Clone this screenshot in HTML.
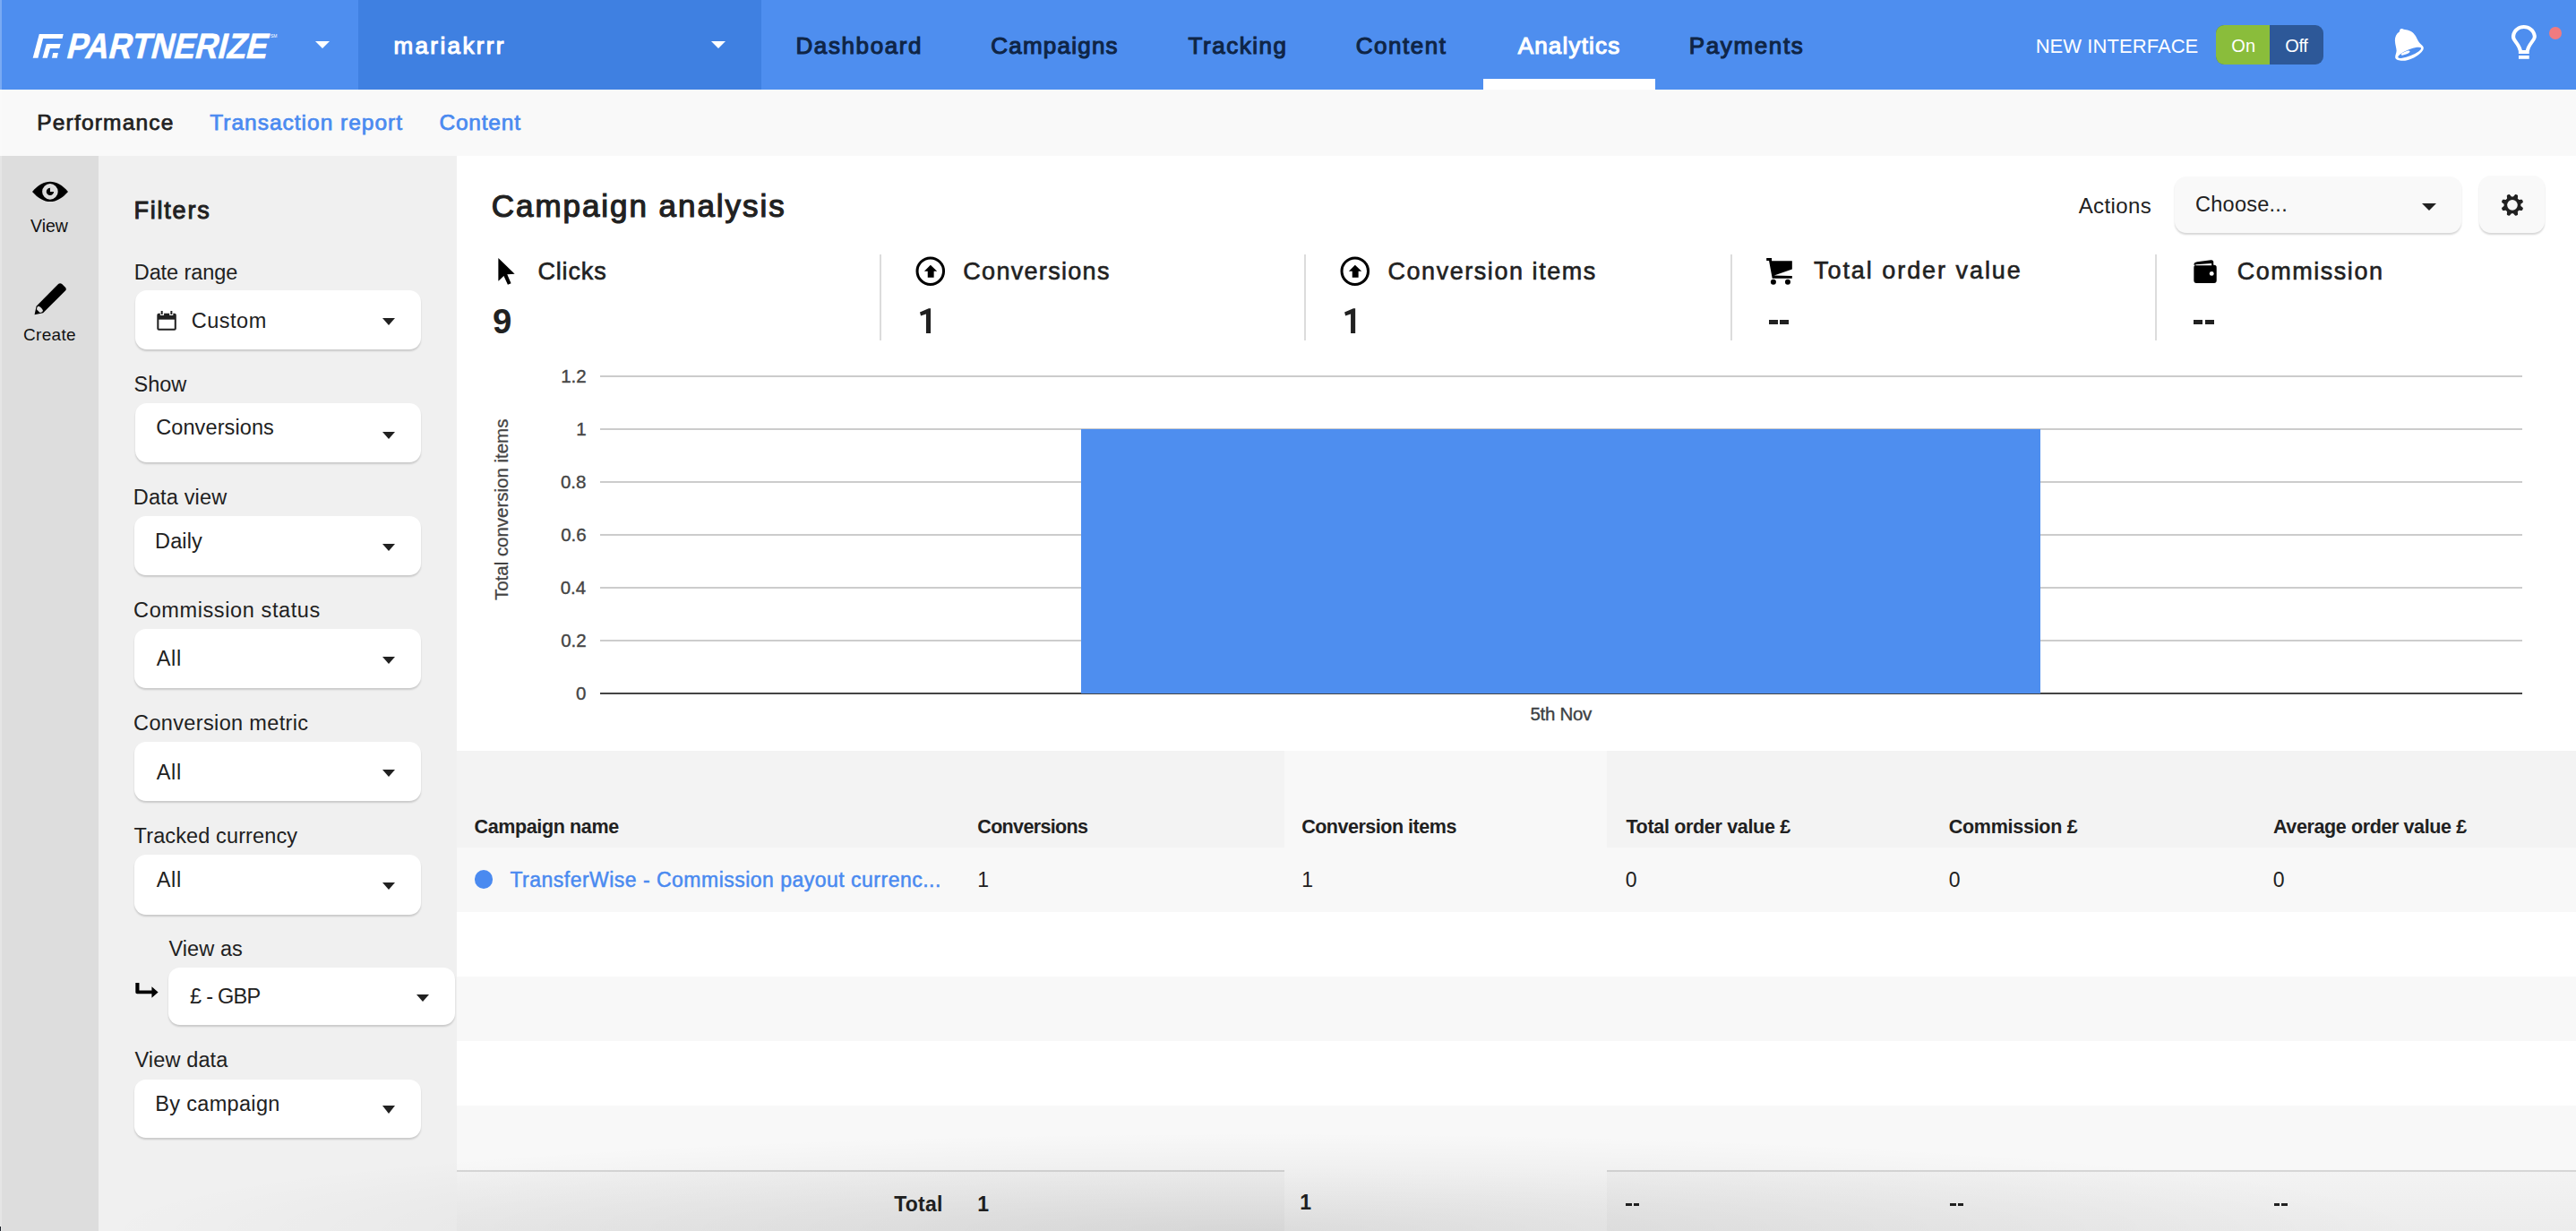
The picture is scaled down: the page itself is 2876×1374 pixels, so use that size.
<!DOCTYPE html>
<html><head><meta charset="utf-8"><title>Partnerize - Campaign analysis</title>
<style>
html,body{margin:0;padding:0;}
body{width:2876px;height:1374px;position:relative;overflow:hidden;background:#fff;font-family:"Liberation Sans",sans-serif;}
.t{position:absolute;white-space:nowrap;}
.r{position:absolute;}
svg.r{overflow:visible;}
</style></head><body>
<div class="r" style="left:0.00px;top:0.00px;width:2876.00px;height:100.00px;background:#4e8eef;"></div>
<div class="r" style="left:400.00px;top:0.00px;width:450.00px;height:100.00px;background:#3f80e1;"></div>
<svg class="r" style="left:30.00px;top:30.00px;" width="80" height="42" viewBox="0 0 2345 1231" preserveAspectRatio="none"><polygon fill="#fff" points="405,235 1195,235 1160,380 530,380 365,1020 195,1020"/><polygon fill="#fff" points="640,555 1105,555 1065,700 760,700 670,1020 510,1020"/><polygon fill="#fff" points="855,850 1025,850 990,1020 820,1020"/></svg>
<svg class="r" style="left:70px;top:30px;" width="240" height="40" viewBox="0 0 240 40"><text x="4" y="35" font-family="Liberation Sans" font-weight="700" font-size="39.5" fill="#fff" stroke="#fff" stroke-width="0.6" textLength="224" lengthAdjust="spacingAndGlyphs" transform="skewX(-14) translate(7.5,0)">PARTNERIZE</text><text x="232" y="12" font-family="Liberation Sans" font-size="5" fill="#fff">SM</text></svg>
<div class="r" style="left:352.00px;top:46.00px;width:0;height:0;border-left:8.00px solid transparent;border-right:8.00px solid transparent;border-top:8.00px solid #fff;"></div>
<div class="t" style="left:439.50px;top:37.99px;font-size:26.00px;line-height:26.00px;color:#fff;letter-spacing:2.375px;-webkit-text-stroke:1.1px #fff;">mariakrrr</div>
<div class="r" style="left:794.00px;top:46.00px;width:0;height:0;border-left:8.00px solid transparent;border-right:8.00px solid transparent;border-top:8.00px solid #fff;"></div>
<div class="t" style="left:888.50px;top:37.99px;font-size:26.00px;line-height:26.00px;color:#0f2546;letter-spacing:1.594px;-webkit-text-stroke:1.1px #0f2546;">Dashboard</div>
<div class="t" style="left:1106.35px;top:37.99px;font-size:26.00px;line-height:26.00px;color:#0f2546;letter-spacing:1.212px;-webkit-text-stroke:1.1px #0f2546;">Campaigns</div>
<div class="t" style="left:1326.50px;top:37.99px;font-size:26.00px;line-height:26.00px;color:#0f2546;letter-spacing:1.536px;-webkit-text-stroke:1.1px #0f2546;">Tracking</div>
<div class="t" style="left:1513.75px;top:37.99px;font-size:26.00px;line-height:26.00px;color:#0f2546;letter-spacing:1.542px;-webkit-text-stroke:1.1px #0f2546;">Content</div>
<div class="t" style="left:1694.70px;top:37.99px;font-size:26.00px;line-height:26.00px;color:#fff;letter-spacing:1.181px;-webkit-text-stroke:1.1px #fff;">Analytics</div>
<div class="t" style="left:1885.70px;top:37.99px;font-size:26.00px;line-height:26.00px;color:#0f2546;letter-spacing:1.650px;-webkit-text-stroke:1.1px #0f2546;">Payments</div>
<div class="r" style="left:1656.00px;top:88.00px;width:192.00px;height:12.00px;background:#fff;"></div>
<div class="t" style="left:2272.65px;top:41.37px;font-size:22.00px;line-height:22.00px;color:#fff;letter-spacing:0.062px;">NEW INTERFACE</div>
<div class="r" style="left:2474px;top:28px;width:120px;height:43.5px;border-radius:9px;overflow:hidden;background:#2d5898;"><div style="position:absolute;left:0;top:0;width:59.5px;height:43.5px;background:#8abd3b;"></div></div>
<div class="t" style="left:2491.25px;top:41.47px;font-size:20.00px;line-height:20.00px;color:#fff;letter-spacing:0.250px;">On</div>
<div class="t" style="left:2551.25px;top:41.47px;font-size:20.00px;line-height:20.00px;color:#fff;letter-spacing:-0.375px;">Off</div>
<svg class="r" style="left:2650.00px;top:20.00px;" width="226" height="60" viewBox="0 0 2576 684" preserveAspectRatio="none"><path fill="#fff" d="M355,138 C338,138 332,158 328,176 C290,200 270,240 272,290 C275,340 290,380 292,420 C290,450 272,480 276,508 C285,540 340,548 400,543 C470,536 560,485 612,432 C645,400 642,368 616,348 C585,322 570,298 555,268 C530,215 500,172 432,155 C405,150 385,145 372,139 Z"/><ellipse cx="458" cy="442" rx="158" ry="40" transform="rotate(-22 458 442)" fill="#4e8eef"/><ellipse cx="406" cy="446" rx="60" ry="18" transform="rotate(-22 406 446)" fill="#fff"/><path fill="#fff" fill-rule="evenodd" d="M1845,456 L1845,422 C1830,362 1792,322 1772,292 C1757,268 1752,248 1755,226 C1765,140 1840,90 1912,90 C1985,90 2062,140 2072,226 C2075,248 2068,268 2052,292 C2032,322 1995,362 1980,422 L1980,456 Z M1891,410 C1876,352 1842,312 1822,282 C1808,262 1801,246 1803,230 C1810,172 1860,136 1912,136 C1965,136 2018,172 2026,230 C2028,246 2020,262 2004,282 C1984,312 1950,352 1935,410 Z"/><rect x="1846" y="478" width="134" height="44" fill="#fff"/></svg>
<div class="r" style="left:2846px;top:30px;width:14px;height:14px;border-radius:50%;background:#f07b80;"></div>
<div class="r" style="left:0.00px;top:100.00px;width:2876.00px;height:74.00px;background:#f9f9f9;"></div>
<div class="t" style="left:41.30px;top:125.06px;font-size:24.50px;line-height:24.50px;color:#212121;letter-spacing:1.180px;-webkit-text-stroke:0.75px #212121;">Performance</div>
<div class="t" style="left:234.20px;top:125.06px;font-size:24.50px;line-height:24.50px;color:#4a8af0;letter-spacing:0.997px;-webkit-text-stroke:0.75px #4a8af0;">Transaction report</div>
<div class="t" style="left:490.40px;top:125.06px;font-size:24.50px;line-height:24.50px;color:#4a8af0;letter-spacing:0.808px;-webkit-text-stroke:0.75px #4a8af0;">Content</div>
<div class="r" style="left:0.00px;top:174.00px;width:110.00px;height:1200.00px;background:#dddddd;"></div>
<svg class="r" style="left:30.00px;top:195.00px;" width="52" height="37" viewBox="0 0 1730 1231" preserveAspectRatio="none"><path fill="#000" d="M200,628 C420,380 640,258 865,258 C1090,258 1310,380 1530,628 C1310,876 1090,997 865,997 C640,997 420,876 200,628 Z"/><circle cx="862" cy="628" r="292" fill="#dddddd"/><circle cx="862" cy="628" r="138" fill="#000"/><path d="M862,628 L862,470 A158,158 0 0 1 1020,628 Z" fill="#dddddd"/></svg>
<div class="t" style="left:34.00px;top:243.49px;font-size:19.50px;line-height:19.50px;color:#111;">View</div>
<svg class="r" style="left:34.00px;top:312.00px;" width="44" height="44" viewBox="0 0 1231 1231" preserveAspectRatio="none"><path fill="#000" d="M185,830 L870,140 C905,108 950,108 985,140 L1090,245 C1122,280 1122,320 1090,352 L395,1040 L128,1097 Z"/><path fill="#dddddd" d="M245,830 C300,840 372,900 392,975 C388,1010 342,1037 295,1037 L198,940 C193,880 213,840 245,830 Z"/></svg>
<div class="t" style="left:26.05px;top:363.61px;font-size:19.00px;line-height:19.00px;color:#111;letter-spacing:0.300px;">Create</div>
<div class="r" style="left:110.00px;top:174.00px;width:400.00px;height:1200.00px;background:#f0f0f0;"></div>
<div class="t" style="left:149.50px;top:221.64px;font-size:27.00px;line-height:27.00px;color:#212121;letter-spacing:1.775px;-webkit-text-stroke:1.0px #212121;">Filters</div>
<div class="t" style="left:149.75px;top:292.70px;font-size:23.50px;line-height:23.50px;color:#212121;letter-spacing:-0.083px;">Date range</div>
<div class="r" style="left:150.50px;top:324.30px;width:319.50px;height:65.30px;background:#fff;border-radius:13px;box-shadow:0 2px 2px rgba(0,0,0,0.16);"></div>
<svg class="r" style="left:168.00px;top:340.00px;" width="36" height="36" viewBox="0 0 1231 1231" preserveAspectRatio="none"><rect x="250" y="330" width="735" height="655" rx="70" fill="#212121"/><rect x="320" y="570" width="595" height="345" fill="#fff"/><rect x="370" y="300" width="145" height="110" fill="#fff"/><rect x="725" y="300" width="140" height="110" fill="#fff"/><rect x="400" y="240" width="68" height="135" fill="#212121"/><rect x="765" y="240" width="68" height="135" fill="#212121"/></svg>
<div class="t" style="left:213.80px;top:346.60px;font-size:23.50px;line-height:23.50px;color:#212121;letter-spacing:0.490px;">Custom</div>
<div class="r" style="left:427.00px;top:355.40px;width:0;height:0;border-left:7.25px solid transparent;border-right:7.25px solid transparent;border-top:8.00px solid #212121;"></div>
<div class="t" style="left:149.50px;top:417.80px;font-size:23.50px;line-height:23.50px;color:#212121;">Show</div>
<div class="r" style="left:150.50px;top:450.40px;width:319.50px;height:65.60px;background:#fff;border-radius:13px;box-shadow:0 2px 2px rgba(0,0,0,0.16);"></div>
<div class="t" style="left:174.20px;top:466.10px;font-size:23.50px;line-height:23.50px;color:#212121;letter-spacing:0.105px;">Conversions</div>
<div class="r" style="left:427.00px;top:481.50px;width:0;height:0;border-left:7.25px solid transparent;border-right:7.25px solid transparent;border-top:8.00px solid #212121;"></div>
<div class="t" style="left:148.75px;top:543.60px;font-size:23.50px;line-height:23.50px;color:#212121;letter-spacing:0.156px;">Data view</div>
<div class="r" style="left:150.10px;top:576.20px;width:319.50px;height:65.70px;background:#fff;border-radius:13px;box-shadow:0 2px 2px rgba(0,0,0,0.16);"></div>
<div class="t" style="left:173.05px;top:592.70px;font-size:23.50px;line-height:23.50px;color:#212121;letter-spacing:0.125px;">Daily</div>
<div class="r" style="left:427.40px;top:607.00px;width:0;height:0;border-left:7.00px solid transparent;border-right:7.00px solid transparent;border-top:8.00px solid #212121;"></div>
<div class="t" style="left:149.10px;top:670.10px;font-size:23.50px;line-height:23.50px;color:#212121;letter-spacing:0.603px;">Commission status</div>
<div class="r" style="left:150.10px;top:702.30px;width:319.50px;height:65.70px;background:#fff;border-radius:13px;box-shadow:0 2px 2px rgba(0,0,0,0.16);"></div>
<div class="t" style="left:174.80px;top:724.40px;font-size:23.50px;line-height:23.50px;color:#212121;letter-spacing:0.625px;">All</div>
<div class="r" style="left:427.40px;top:732.90px;width:0;height:0;border-left:7.00px solid transparent;border-right:7.00px solid transparent;border-top:8.00px solid #212121;"></div>
<div class="t" style="left:149.10px;top:795.90px;font-size:23.50px;line-height:23.50px;color:#212121;letter-spacing:0.353px;">Conversion metric</div>
<div class="r" style="left:150.10px;top:828.40px;width:319.50px;height:65.40px;background:#fff;border-radius:13px;box-shadow:0 2px 2px rgba(0,0,0,0.16);"></div>
<div class="t" style="left:174.80px;top:850.50px;font-size:23.50px;line-height:23.50px;color:#212121;letter-spacing:0.625px;">All</div>
<div class="r" style="left:427.40px;top:859.00px;width:0;height:0;border-left:7.00px solid transparent;border-right:7.00px solid transparent;border-top:8.00px solid #212121;"></div>
<div class="t" style="left:149.60px;top:922.00px;font-size:23.50px;line-height:23.50px;color:#212121;letter-spacing:0.117px;">Tracked currency</div>
<div class="r" style="left:150.10px;top:954.00px;width:319.50px;height:66.50px;background:#fff;border-radius:13px;box-shadow:0 2px 2px rgba(0,0,0,0.16);"></div>
<div class="t" style="left:174.80px;top:971.10px;font-size:23.50px;line-height:23.50px;color:#212121;letter-spacing:0.625px;">All</div>
<div class="r" style="left:427.40px;top:984.60px;width:0;height:0;border-left:7.00px solid transparent;border-right:7.00px solid transparent;border-top:8.00px solid #212121;"></div>
<div class="t" style="left:188.40px;top:1048.40px;font-size:23.50px;line-height:23.50px;color:#212121;letter-spacing:0.100px;">View as</div>
<svg class="r" style="left:144.00px;top:1088.00px;" width="40" height="34" viewBox="0 0 1448 1231" preserveAspectRatio="none"><path fill="#000" d="M265,330 L415,330 L415,630 L920,630 L920,478 L1180,705 L920,932 L920,770 L330,770 C290,770 265,740 265,700 Z"/></svg>
<div class="r" style="left:187.70px;top:1080.40px;width:320.30px;height:63.90px;background:#fff;border-radius:13px;box-shadow:0 2px 2px rgba(0,0,0,0.16);"></div>
<div class="t" style="left:212.10px;top:1100.90px;font-size:23.50px;line-height:23.50px;color:#212121;letter-spacing:-0.767px;">£ - GBP</div>
<div class="r" style="left:465.00px;top:1110.40px;width:0;height:0;border-left:7.20px solid transparent;border-right:7.20px solid transparent;border-top:8.40px solid #212121;"></div>
<div class="t" style="left:150.40px;top:1172.10px;font-size:23.50px;line-height:23.50px;color:#212121;letter-spacing:0.150px;">View data</div>
<div class="r" style="left:150.40px;top:1204.50px;width:319.60px;height:65.00px;background:#fff;border-radius:13px;box-shadow:0 2px 2px rgba(0,0,0,0.16);"></div>
<div class="t" style="left:173.25px;top:1221.10px;font-size:23.50px;line-height:23.50px;color:#212121;letter-spacing:0.325px;">By campaign</div>
<div class="r" style="left:427.40px;top:1234.00px;width:0;height:0;border-left:7.00px solid transparent;border-right:7.00px solid transparent;border-top:9.00px solid #212121;"></div>
<div class="r" style="left:510.00px;top:174.00px;width:2366.00px;height:1200.00px;background:#ffffff;"></div>
<div class="t" style="left:548.75px;top:212.47px;font-size:35.00px;line-height:35.00px;color:#212121;letter-spacing:1.953px;-webkit-text-stroke:1.2px #212121;">Campaign analysis</div>
<div class="t" style="left:2320.70px;top:217.78px;font-size:24.00px;line-height:24.00px;color:#212121;letter-spacing:0.383px;">Actions</div>
<div class="r" style="left:2428.00px;top:196.60px;width:320.00px;height:63.70px;background:#f9f9f9;border-radius:13px;box-shadow:0 2px 2px rgba(0,0,0,0.16);"></div>
<div class="t" style="left:2451.00px;top:216.60px;font-size:23.50px;line-height:23.50px;color:#212121;letter-spacing:0.262px;">Choose...</div>
<div class="r" style="left:2704.00px;top:227.00px;width:0;height:0;border-left:8.00px solid transparent;border-right:8.00px solid transparent;border-top:8.40px solid #212121;"></div>
<div class="r" style="left:2767.50px;top:195.80px;width:73.10px;height:64.40px;background:#f9f9f9;border-radius:13px;box-shadow:0 2px 2px rgba(0,0,0,0.16);"></div>
<svg class="r" style="left:2760.00px;top:190.00px;" width="90" height="80" viewBox="0 0 1385 1231" preserveAspectRatio="none"><polygon fill="#212121" points="836.0,598.0 836.0,601.8 835.8,605.5 835.6,609.3 835.2,613.1 839.5,617.4 846.2,622.4 853.2,627.9 860.3,633.8 866.9,640.0 872.8,646.5 876.1,652.5 874.6,657.3 873.0,662.1 871.2,666.8 869.4,671.5 867.4,676.1 865.3,680.7 863.1,685.2 860.7,689.6 854.1,691.6 845.4,692.0 836.3,691.7 827.1,690.9 818.3,689.8 810.1,688.6 803.9,688.6 801.5,691.5 799.0,694.4 796.5,697.1 793.8,699.8 791.1,702.5 788.4,705.0 785.5,707.5 782.6,709.9 782.6,716.1 783.8,724.3 784.9,733.1 785.7,742.3 786.0,751.4 785.6,760.1 783.6,766.7 779.2,769.1 774.7,771.3 770.1,773.4 765.5,775.4 760.8,777.2 756.1,779.0 751.3,780.6 746.5,782.1 740.5,778.8 734.0,772.9 727.8,766.3 721.9,759.2 716.4,752.2 711.4,745.5 707.1,741.2 703.3,741.6 699.5,741.8 695.8,742.0 692.0,742.0 688.2,742.0 684.5,741.8 680.7,741.6 676.9,741.2 672.6,745.5 667.6,752.2 662.1,759.2 656.2,766.3 650.0,772.9 643.5,778.8 637.5,782.1 632.7,780.6 627.9,779.0 623.2,777.2 618.5,775.4 613.9,773.4 609.3,771.3 604.8,769.1 600.4,766.7 598.4,760.1 598.0,751.4 598.3,742.3 599.1,733.1 600.2,724.3 601.4,716.1 601.4,709.9 598.5,707.5 595.6,705.0 592.9,702.5 590.2,699.8 587.5,697.1 585.0,694.4 582.5,691.5 580.1,688.6 573.9,688.6 565.7,689.8 556.9,690.9 547.7,691.7 538.6,692.0 529.9,691.6 523.3,689.6 520.9,685.2 518.7,680.7 516.6,676.1 514.6,671.5 512.8,666.8 511.0,662.1 509.4,657.3 507.9,652.5 511.2,646.5 517.1,640.0 523.7,633.8 530.8,627.9 537.8,622.4 544.5,617.4 548.8,613.1 548.4,609.3 548.2,605.5 548.0,601.8 548.0,598.0 548.0,594.2 548.2,590.5 548.4,586.7 548.8,582.9 544.5,578.6 537.8,573.6 530.8,568.1 523.7,562.2 517.1,556.0 511.2,549.5 507.9,543.5 509.4,538.7 511.0,533.9 512.8,529.2 514.6,524.5 516.6,519.9 518.7,515.3 520.9,510.8 523.3,506.4 529.9,504.4 538.6,504.0 547.7,504.3 556.9,505.1 565.7,506.2 573.9,507.4 580.1,507.4 582.5,504.5 585.0,501.6 587.5,498.9 590.2,496.2 592.9,493.5 595.6,491.0 598.5,488.5 601.4,486.1 601.4,479.9 600.2,471.7 599.1,462.9 598.3,453.7 598.0,444.6 598.4,435.9 600.4,429.3 604.8,426.9 609.3,424.7 613.9,422.6 618.5,420.6 623.2,418.8 627.9,417.0 632.7,415.4 637.5,413.9 643.5,417.2 650.0,423.1 656.2,429.7 662.1,436.8 667.6,443.8 672.6,450.5 676.9,454.8 680.7,454.4 684.5,454.2 688.2,454.0 692.0,454.0 695.8,454.0 699.5,454.2 703.3,454.4 707.1,454.8 711.4,450.5 716.4,443.8 721.9,436.8 727.8,429.7 734.0,423.1 740.5,417.2 746.5,413.9 751.3,415.4 756.1,417.0 760.8,418.8 765.5,420.6 770.1,422.6 774.7,424.7 779.2,426.9 783.6,429.3 785.6,435.9 786.0,444.6 785.7,453.7 784.9,462.9 783.8,471.7 782.6,479.9 782.6,486.1 785.5,488.5 788.4,491.0 791.1,493.5 793.8,496.2 796.5,498.9 799.0,501.6 801.5,504.5 803.9,507.4 810.1,507.4 818.3,506.2 827.1,505.1 836.3,504.3 845.4,504.0 854.1,504.4 860.7,506.4 863.1,510.8 865.3,515.3 867.4,519.9 869.4,524.5 871.2,529.2 873.0,533.9 874.6,538.7 876.1,543.5 872.8,549.5 866.9,556.0 860.3,562.2 853.2,568.1 846.2,573.6 839.5,578.6 835.2,582.9 835.6,586.7 835.8,590.5 836.0,594.2"/><circle cx="692" cy="598" r="90" fill="#f9f9f9"/></svg>
<svg class="r" style="left:545.00px;top:280.00px;" width="80" height="100" viewBox="0 0 985 1231" preserveAspectRatio="none"><polygon fill="#000" points="140,100 140,415 215,345 270,465 315,445 262,322 365,318"/></svg>
<div class="t" style="left:600.45px;top:289.94px;font-size:27.00px;line-height:27.00px;color:#212121;letter-spacing:0.840px;-webkit-text-stroke:0.6px #212121;">Clicks</div>
<div class="t" style="left:549.85px;top:339.63px;font-size:38.00px;line-height:38.00px;color:#212121;font-weight:700;transform-origin:1.25px 0;transform:scaleX(1.0108);">9</div>
<svg class="r" style="left:1010.00px;top:275.00px;" width="80" height="110" viewBox="0 0 895 1231" preserveAspectRatio="none"><circle cx="322" cy="310" r="165" fill="none" stroke="#000" stroke-width="34"/><polygon fill="#000" points="245,310 323,232 405,310 365,310 365,390 288,390 288,310"/></svg>
<div class="t" style="left:1075.25px;top:289.94px;font-size:27.00px;line-height:27.00px;color:#212121;letter-spacing:1.310px;-webkit-text-stroke:0.6px #212121;">Conversions</div>
<svg class="r" style="left:1010.00px;top:275.00px;" width="80" height="110" viewBox="0 0 895 1231" preserveAspectRatio="none"><polygon fill="#212121" points="190,822 300,775 325,775 325,1085 268,1085 268,845 202,868"/></svg>
<svg class="r" style="left:1484.00px;top:275.00px;" width="80" height="110" viewBox="0 0 895 1231" preserveAspectRatio="none"><circle cx="322" cy="310" r="165" fill="none" stroke="#000" stroke-width="34"/><polygon fill="#000" points="245,310 323,232 405,310 365,310 365,390 288,390 288,310"/></svg>
<div class="t" style="left:1549.45px;top:289.94px;font-size:27.00px;line-height:27.00px;color:#212121;letter-spacing:1.553px;-webkit-text-stroke:0.6px #212121;">Conversion items</div>
<svg class="r" style="left:1485.00px;top:275.00px;" width="80" height="110" viewBox="0 0 895 1231" preserveAspectRatio="none"><polygon fill="#212121" points="180,822 290,775 315,775 315,1085 258,1085 258,845 192,868"/></svg>
<svg class="r" style="left:1960.00px;top:280.00px;" width="60" height="50" viewBox="0 0 1477 1231" preserveAspectRatio="none"><path fill="#000" d="M300,200 L445,200 L445,275 L1005,275 L1005,505 L510,680 L1005,690 L1005,760 L460,760 L370,270 L300,270 Z"/><circle cx="490" cy="855" r="74" fill="#000"/><circle cx="885" cy="855" r="74" fill="#000"/></svg>
<div class="t" style="left:2025.00px;top:288.64px;font-size:27.00px;line-height:27.00px;color:#212121;letter-spacing:1.950px;-webkit-text-stroke:0.6px #212121;">Total order value</div>
<div class="r" style="left:1974.50px;top:357.30px;width:10.00px;height:5.20px;background:#212121;"></div>
<div class="r" style="left:1987.00px;top:357.30px;width:10.00px;height:5.20px;background:#212121;"></div>
<svg class="r" style="left:2440.00px;top:280.00px;" width="50" height="50" viewBox="0 0 1231 1231" preserveAspectRatio="none"><rect x="230" y="390" width="625" height="495" rx="70" fill="#000"/><path fill="#000" d="M230,390 C235,330 260,310 320,300 L700,250 C750,245 770,270 770,310 L770,395 Z"/><path fill="#fff" d="M285,375 L715,345 L720,400 L285,400 Z"/><circle cx="720" cy="625" r="60" fill="#fff"/></svg>
<div class="t" style="left:2497.75px;top:289.94px;font-size:27.00px;line-height:27.00px;color:#212121;letter-spacing:1.517px;-webkit-text-stroke:0.6px #212121;">Commission</div>
<div class="r" style="left:2449.00px;top:357.30px;width:10.00px;height:5.20px;background:#212121;"></div>
<div class="r" style="left:2461.50px;top:357.30px;width:10.00px;height:5.20px;background:#212121;"></div>
<div class="r" style="left:982.00px;top:284.00px;width:2.00px;height:96.00px;background:#dcdcdc;"></div>
<div class="r" style="left:1456.00px;top:284.00px;width:2.00px;height:96.00px;background:#dcdcdc;"></div>
<div class="r" style="left:1932.00px;top:284.00px;width:2.00px;height:96.00px;background:#dcdcdc;"></div>
<div class="r" style="left:2406.00px;top:284.00px;width:2.00px;height:96.00px;background:#dcdcdc;"></div>
<div class="r" style="left:670.00px;top:419.00px;width:2146.00px;height:2.00px;background:#cccccc;"></div>
<div class="r" style="left:670.00px;top:477.90px;width:2146.00px;height:2.00px;background:#cccccc;"></div>
<div class="r" style="left:670.00px;top:536.80px;width:2146.00px;height:2.00px;background:#cccccc;"></div>
<div class="r" style="left:670.00px;top:595.70px;width:2146.00px;height:2.00px;background:#cccccc;"></div>
<div class="r" style="left:670.00px;top:654.60px;width:2146.00px;height:2.00px;background:#cccccc;"></div>
<div class="r" style="left:670.00px;top:713.50px;width:2146.00px;height:2.00px;background:#cccccc;"></div>
<div class="r" style="left:670.00px;top:772.50px;width:2146.00px;height:2.50px;background:#444444;"></div>
<div class="r" style="left:1206.70px;top:478.70px;width:1071.30px;height:294.90px;background:#4e8eef;"></div>
<div class="t" style="left:626.20px;top:410.14px;font-size:20.50px;line-height:20.50px;color:#444444;-webkit-text-stroke:0.35px #444444;">1.2</div>
<div class="t" style="left:643.20px;top:469.04px;font-size:20.50px;line-height:20.50px;color:#444444;-webkit-text-stroke:0.35px #444444;">1</div>
<div class="t" style="left:625.95px;top:527.94px;font-size:20.50px;line-height:20.50px;color:#444444;-webkit-text-stroke:0.35px #444444;">0.8</div>
<div class="t" style="left:626.20px;top:586.84px;font-size:20.50px;line-height:20.50px;color:#444444;-webkit-text-stroke:0.35px #444444;">0.6</div>
<div class="t" style="left:625.70px;top:645.74px;font-size:20.50px;line-height:20.50px;color:#444444;-webkit-text-stroke:0.35px #444444;">0.4</div>
<div class="t" style="left:626.20px;top:704.64px;font-size:20.50px;line-height:20.50px;color:#444444;-webkit-text-stroke:0.35px #444444;">0.2</div>
<div class="t" style="left:642.95px;top:763.74px;font-size:20.50px;line-height:20.50px;color:#444444;-webkit-text-stroke:0.35px #444444;">0</div>
<div class="t" style="left:550.30px;top:670.10px;font-size:20.5px;line-height:20.5px;color:#444;transform-origin:0 0;transform:rotate(-90deg);white-space:nowrap;letter-spacing:-0.02px;-webkit-text-stroke:0.3px #444;">Total conversion items</div>
<div class="t" style="left:1708.55px;top:786.54px;font-size:20.50px;line-height:20.50px;color:#3c4043;letter-spacing:-0.333px;-webkit-text-stroke:0.35px #3c4043;">5th Nov</div>
<div class="r" style="left:510.00px;top:838.00px;width:2366.00px;height:108.00px;background:#f3f3f3;"></div>
<div class="r" style="left:1434.00px;top:838.00px;width:360.00px;height:108.00px;background:#f8f8f8;"></div>
<div class="t" style="left:529.55px;top:912.60px;font-size:21.50px;line-height:21.50px;color:#212121;font-weight:700;letter-spacing:-0.375px;">Campaign name</div>
<div class="t" style="left:1091.25px;top:912.60px;font-size:21.50px;line-height:21.50px;color:#212121;font-weight:700;letter-spacing:-0.645px;">Conversions</div>
<div class="t" style="left:1453.15px;top:912.60px;font-size:21.50px;line-height:21.50px;color:#212121;font-weight:700;letter-spacing:-0.480px;">Conversion items</div>
<div class="t" style="left:1815.40px;top:912.60px;font-size:21.50px;line-height:21.50px;color:#212121;font-weight:700;letter-spacing:-0.325px;">Total order value £</div>
<div class="t" style="left:2175.65px;top:912.60px;font-size:21.50px;line-height:21.50px;color:#212121;font-weight:700;letter-spacing:-0.255px;">Commission £</div>
<div class="t" style="left:2538.00px;top:912.60px;font-size:21.50px;line-height:21.50px;color:#212121;font-weight:700;letter-spacing:-0.388px;">Average order value £</div>
<div class="r" style="left:510.00px;top:946.00px;width:2366.00px;height:72.00px;background:#f8f8f8;"></div>
<div class="r" style="left:530.3px;top:971.4px;width:20.2px;height:20.2px;border-radius:50%;background:#4a8af0;"></div>
<div class="t" style="left:569.40px;top:971.33px;font-size:23.00px;line-height:23.00px;color:#4a8af0;letter-spacing:0.485px;-webkit-text-stroke:0.5px #4a8af0;">TransferWise - Commission payout currenc...</div>
<div class="t" style="left:1091.25px;top:971.23px;font-size:23.00px;line-height:23.00px;color:#212121;">1</div>
<div class="t" style="left:1453.25px;top:971.23px;font-size:23.00px;line-height:23.00px;color:#212121;">1</div>
<div class="t" style="left:1814.65px;top:971.23px;font-size:23.00px;line-height:23.00px;color:#212121;">0</div>
<div class="t" style="left:2175.65px;top:971.23px;font-size:23.00px;line-height:23.00px;color:#212121;">0</div>
<div class="t" style="left:2537.75px;top:971.23px;font-size:23.00px;line-height:23.00px;color:#212121;">0</div>
<div class="r" style="left:510.00px;top:1018.00px;width:2366.00px;height:72.00px;background:#ffffff;"></div>
<div class="r" style="left:510.00px;top:1090.00px;width:2366.00px;height:72.00px;background:#f8f8f8;"></div>
<div class="r" style="left:510.00px;top:1162.00px;width:2366.00px;height:72.00px;background:#ffffff;"></div>
<div class="r" style="left:510.00px;top:1234.00px;width:2366.00px;height:72.00px;background:#f8f8f8;"></div>
<div class="r" style="left:510px;top:1306px;width:2366px;height:68px;background:linear-gradient(#f3f3f3,#ececec);"></div>
<div class="r" style="left:510.00px;top:1306.00px;width:924.00px;height:2.00px;background:#d6d6d6;"></div>
<div class="r" style="left:1794.00px;top:1306.00px;width:1082.00px;height:2.00px;background:#d6d6d6;"></div>
<div class="r" style="left:1434px;top:1306px;width:360px;height:68px;background:linear-gradient(#f8f8f8,#f2f2f2);"></div>
<div class="t" style="left:998.15px;top:1333.13px;font-size:23.00px;line-height:23.00px;color:#212121;font-weight:700;letter-spacing:0.275px;">Total</div>
<div class="t" style="left:1091.25px;top:1333.13px;font-size:23.00px;line-height:23.00px;color:#212121;font-weight:700;">1</div>
<div class="t" style="left:1451.35px;top:1330.83px;font-size:23.00px;line-height:23.00px;color:#212121;font-weight:700;">1</div>
<div class="r" style="left:1815.00px;top:1343.00px;width:6.50px;height:2.50px;background:#212121;"></div>
<div class="r" style="left:1823.50px;top:1343.00px;width:6.50px;height:2.50px;background:#212121;"></div>
<div class="r" style="left:2177.00px;top:1343.00px;width:6.50px;height:2.50px;background:#212121;"></div>
<div class="r" style="left:2185.50px;top:1343.00px;width:6.50px;height:2.50px;background:#212121;"></div>
<div class="r" style="left:2538.80px;top:1343.00px;width:6.50px;height:2.50px;background:#212121;"></div>
<div class="r" style="left:2547.30px;top:1343.00px;width:6.50px;height:2.50px;background:#212121;"></div>
<div class="r" style="left:0.00px;top:0.00px;width:2.00px;height:1374.00px;background:rgba(255,255,255,0.25);"></div>
<div class="r" style="left:0.00px;top:1369.00px;width:1.00px;height:5.00px;background:#1a1f28;"></div>
<div class="r" style="left:130px;top:1240px;width:2560px;height:134px;background:radial-gradient(ellipse 1300px 110px at 50% 100%, rgba(0,0,0,0.095), rgba(0,0,0,0));"></div>
</body></html>
